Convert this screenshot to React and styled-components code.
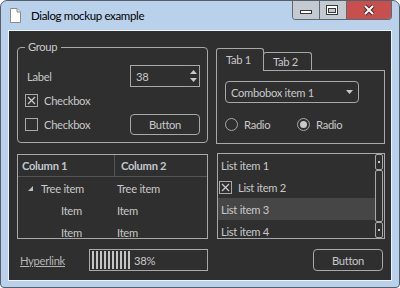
import React from 'react';
import styled, { createGlobalStyle } from 'styled-components';

const FG = '#c8c8c8';
const LINE = '#a8a8a8';
const DARK = '#2f2f2f';

const Global = createGlobalStyle`
  html, body { margin: 0; padding: 0; background: #ffffff; }
  body { font-family: Lato, "Liberation Sans", sans-serif; font-size: 11.2px; letter-spacing: -0.3px; }
  * { box-sizing: border-box; }
`;

const Window = styled.div`
  width: 400px;
  height: 288px;
  border: 1px solid #56606b;
  border-radius: 7px 7px 4px 4px;
  background: #b9d1ea;
  display: flex;
  flex-direction: column;
  overflow: hidden;
`;

const TitleBar = styled.div`
  height: 29px;
  flex: none;
  display: flex;
  align-items: center;
  padding-left: 9px;
`;

const Title = styled.span`
  margin-left: 10px;
  font-size: 11.5px;
  letter-spacing: -0.35px;
  color: #000;
`;

const Caption = styled.div`
  margin-left: auto;
  margin-right: 7px;
  margin-top: -1px;
  align-self: flex-start;
  display: flex;
  height: 20px;
  border: 1px solid #5f6873;
  border-top: none;
  border-radius: 0 0 4px 4px;
  overflow: hidden;
`;

const CapBtn = styled.div`
  width: ${p => p.$w}px;
  height: 100%;
  background: ${p => p.$bg};
  border-left: ${p => (p.$first ? 'none' : '1px solid #5f6873')};
  display: flex;
`;

const Client = styled.div`
  flex: 1;
  margin: 0 7px 6px 7px;
  border: 1px solid #eef3f9;
  background: ${DARK};
  color: ${FG};
  display: grid;
  grid-template-columns: 191px 169px;
  grid-template-rows: 96px 86px 22px;
  column-gap: 8px;
  row-gap: 10px;
  padding: 16px 0 0 8px;
  align-content: start;
`;

const GroupBox = styled.div`
  position: relative;
  border: 1px solid ${LINE};
  border-radius: 4px;
  padding: 17px 7px 0 7px;
  display: grid;
  grid-template-columns: 1fr 70px;
  grid-template-rows: 22px 22px 22px;
  row-gap: 2px;
  align-items: center;
`;

const Legend = styled.span`
  position: absolute;
  top: -8px;
  left: 7px;
  padding: 0 4px 0 3px;
  background: ${DARK};
  line-height: 14px;
`;

const FieldLabel = styled.span`
  margin-left: 2px;
`;

const SpinBox = styled.div`
  height: 22px;
  border: 1px solid ${LINE};
  display: flex;
  align-items: center;
  justify-content: space-between;
  padding: 0 2px 0 5px;
`;

const CheckRow = styled.label`
  display: flex;
  align-items: center;
  gap: 6px;
`;

const Box = styled.span`
  width: 13px;
  height: 13px;
  border: 1px solid ${LINE};
  display: flex;
  flex: none;
`;

const Button = styled.div`
  width: 70px;
  height: ${p => p.$h || 21}px;
  border: 1px solid ${LINE};
  border-radius: 4px;
  display: flex;
  align-items: center;
  justify-content: center;
  justify-self: ${p => p.$end ? 'end' : 'auto'};
  margin-right: ${p => p.$mr || 0}px;
`;

const TabWidget = styled.div`
  display: flex;
  flex-direction: column;
  margin-top: 1px;
  height: 96px;
`;

const TabBar = styled.div`
  height: 22px;
  display: flex;
  align-items: flex-end;
  position: relative;
  z-index: 1;
`;

const Tab = styled.div`
  width: ${p => p.$w}px;
  height: ${p => (p.$active ? 23 : 18)}px;
  margin-bottom: ${p => (p.$active ? -1 : 0)}px;
  margin-left: ${p => (p.$active ? 0 : -1)}px;
  border: 1px solid ${LINE};
  border-bottom: none;
  border-radius: 3px 3px 0 0;
  background: ${DARK};
  padding-left: 9px;
  display: flex;
  align-items: center;
  padding-bottom: ${p => (p.$active ? 2 : 0)}px;
`;

const TabPane = styled.div`
  flex: 1;
  border: 1px solid ${LINE};
  padding: 10px 0 0 8px;
`;

const Combo = styled.div`
  width: 134px;
  height: 22px;
  border: 1px solid ${LINE};
  border-radius: 4px;
  display: flex;
  align-items: center;
  justify-content: space-between;
  padding: 0 5px 0 5px;
`;

const RadioRow = styled.div`
  margin-top: 11px;
  height: 20px;
  display: grid;
  grid-template-columns: 72px 72px;
  align-items: center;
`;

const Radio = styled.span`
  width: 13px;
  height: 13px;
  border: 1px solid ${LINE};
  border-radius: 50%;
  display: flex;
  align-items: center;
  justify-content: center;
  &::after {
    content: '';
    width: 7px;
    height: 7px;
    border-radius: 50%;
    background: ${p => (p.$on ? '#c8c8c8' : 'transparent')};
  }
`;

const Tree = styled.div`
  margin-top: 1px;
  border: 1px solid ${LINE};
  display: grid;
  grid-template-columns: 97px 1fr;
  grid-auto-rows: 22px;
  align-content: start;
  overflow: hidden;
`;

const HeadCell = styled.div`
  border-bottom: 1px solid #555;
  border-right: ${p => (p.$div ? '1px solid #555' : 'none')};
  font-weight: bold;
  padding-left: ${p => p.$pl}px;
  display: flex;
  align-items: center;
  color: #c2c6cc;
`;

const Cell = styled.div`
  display: flex;
  align-items: center;
  padding-left: ${p => p.$pl}px;
  gap: 8px;
`;

const List = styled.div`
  margin-left: 1px;
  border: 1px solid ${LINE};
  display: flex;
  overflow: hidden;
`;

const ListItems = styled.div`
  flex: 1;
  display: flex;
  flex-direction: column;
  overflow: hidden;
`;

const ListItem = styled.div`
  height: 22px;
  flex: none;
  display: flex;
  align-items: center;
  gap: 6px;
  padding-left: ${p => p.$pl ?? 3}px;
  background: ${p => (p.$sel ? '#464646' : 'transparent')};
`;

const ScrollBar = styled.div`
  width: 8px;
  margin-right: 1px;
  display: flex;
  flex-direction: column;
`;

const ScrollPart = styled.div`
  height: ${p => p.$h}px;
  flex: ${p => (p.$h ? 'none' : 1)};
  border: 1px solid ${LINE};
  border-radius: 2px;
  display: flex;
  align-items: center;
  justify-content: center;
  &::after {
    content: '';
    width: 2px;
    height: 2px;
    background: ${p => (p.$dot ? '#c8c8c8' : 'transparent')};
  }
`;

const Footer = styled.div`
  grid-column: 1 / span 2;
  display: grid;
  grid-template-columns: 191px 169px;
  column-gap: 8px;
  align-items: center;
`;

const FooterLeft = styled.div`
  display: flex;
  align-items: center;
  justify-content: space-between;
`;

const Link = styled.span`
  margin-left: 3px;
  text-decoration: underline;
  color: #b4b4b4;
`;

const Progress = styled.div`
  width: 119px;
  height: 22px;
  border: 1px solid ${LINE};
  padding: 1px 2px;
  display: flex;
  align-items: stretch;
  gap: 2px;
`;

const Bar = styled.span`
  width: 2px;
  background: #c4c4c4;
`;

const Percent = styled.span`
  margin-left: 2px;
  align-self: center;
`;

const CheckX = () => (
  <svg width="11" height="11" viewBox="0 0 11 11">
    <path d="M2 2 L9 9 M9 2 L2 9" stroke="#c8c8c8" strokeWidth="1.3" />
  </svg>
);

const CheckBox = ({ on }) => <Box>{on && <CheckX />}</Box>;

export default function App() {
  return (
    <>
      <Global />
      <Window>
        <TitleBar>
          <svg width="11" height="15" viewBox="0 0 11 15">
            <path d="M0.5 0.5 H7 L10.5 4 V14.5 H0.5 Z" fill="#fff" stroke="#8c8c8c" />
            <path d="M7 0.5 V4 H10.5" fill="#e8e8e8" stroke="#8c8c8c" />
          </svg>
          <Title>Dialog mockup example</Title>
          <Caption>
            <CapBtn $w={26} $bg="#c4cad1" $first>
              <svg width="26" height="19" viewBox="0 0 26 19">
                <rect x="7.5" y="10.5" width="11" height="3" fill="#fff" stroke="#3a3a3a" />
              </svg>
            </CapBtn>
            <CapBtn $w={27} $bg="#c4cad1">
              <svg width="26" height="19" viewBox="0 0 26 19">
                <rect x="6.5" y="5.5" width="11" height="9" fill="#fff" stroke="#3a3a3a" />
                <rect x="8.5" y="8.5" width="7" height="4" fill="#c4cad1" stroke="#3a3a3a" />
              </svg>
            </CapBtn>
            <CapBtn $w={45} $bg="#c7504f">
              <svg width="44" height="19" viewBox="0 0 44 19">
                <path d="M18 6 L26 14 M26 6 L18 14" stroke="#4a2a2a" strokeWidth="4" />
                <path d="M18 6 L26 14 M26 6 L18 14" stroke="#fff" strokeWidth="2" />
              </svg>
            </CapBtn>
          </Caption>
        </TitleBar>
        <Client>
          <GroupBox>
            <Legend>Group</Legend>
            <FieldLabel>Label</FieldLabel>
            <SpinBox>
              <span>38</span>
              <svg width="7" height="14" viewBox="0 0 7 14">
                <path d="M3.5 1 L7 5 H0 Z" fill="#c8c8c8" />
                <path d="M0 9 H7 L3.5 13 Z" fill="#c8c8c8" />
              </svg>
            </SpinBox>
            <CheckRow>
              <CheckBox on />
              Checkbox
            </CheckRow>
            <span />
            <CheckRow>
              <CheckBox />
              Checkbox
            </CheckRow>
            <Button>Button</Button>
          </GroupBox>

          <TabWidget>
            <TabBar>
              <Tab $active $w={48}>Tab 1</Tab>
              <Tab $w={49}>Tab 2</Tab>
            </TabBar>
            <TabPane>
              <Combo>
                <span>Combobox item 1</span>
                <svg width="7" height="4" viewBox="0 0 7 4">
                  <path d="M0 0 H7 L3.5 4 Z" fill="#c8c8c8" />
                </svg>
              </Combo>
              <RadioRow>
                <CheckRow>
                  <Radio />
                  Radio
                </CheckRow>
                <CheckRow>
                  <Radio $on />
                  Radio
                </CheckRow>
              </RadioRow>
            </TabPane>
          </TabWidget>

          <Tree>
            <HeadCell $div $pl={4}>Column 1</HeadCell>
            <HeadCell $pl={6}>Column 2</HeadCell>
            <Cell $pl={10}>
              <svg width="5" height="5" viewBox="0 0 5 5">
                <path d="M5 0 V5 H0 Z" fill="#bdbdbd" />
              </svg>
              Tree item
            </Cell>
            <Cell $pl={2}>Tree item</Cell>
            <Cell $pl={43}>Item</Cell>
            <Cell $pl={2}>Item</Cell>
            <Cell $pl={43}>Item</Cell>
            <Cell $pl={2}>Item</Cell>
          </Tree>

          <List>
            <ListItems>
              <ListItem>List item 1</ListItem>
              <ListItem $pl={1}>
                <CheckBox on />
                List item 2
              </ListItem>
              <ListItem $sel>List item 3</ListItem>
              <ListItem>List item 4</ListItem>
            </ListItems>
            <ScrollBar>
              <ScrollPart $h={16} $dot />
              <ScrollPart />
              <ScrollPart $h={16} $dot />
            </ScrollBar>
          </List>

          <Footer>
            <FooterLeft>
              <Link>Hyperlink</Link>
              <Progress>
                {Array.from({ length: 10 }).map((_, i) => (
                  <Bar key={i} />
                ))}
                <Percent>38%</Percent>
              </Progress>
            </FooterLeft>
            <Button $h={22} $end $mr={2}>Button</Button>
          </Footer>
        </Client>
      </Window>
    </>
  );
}
